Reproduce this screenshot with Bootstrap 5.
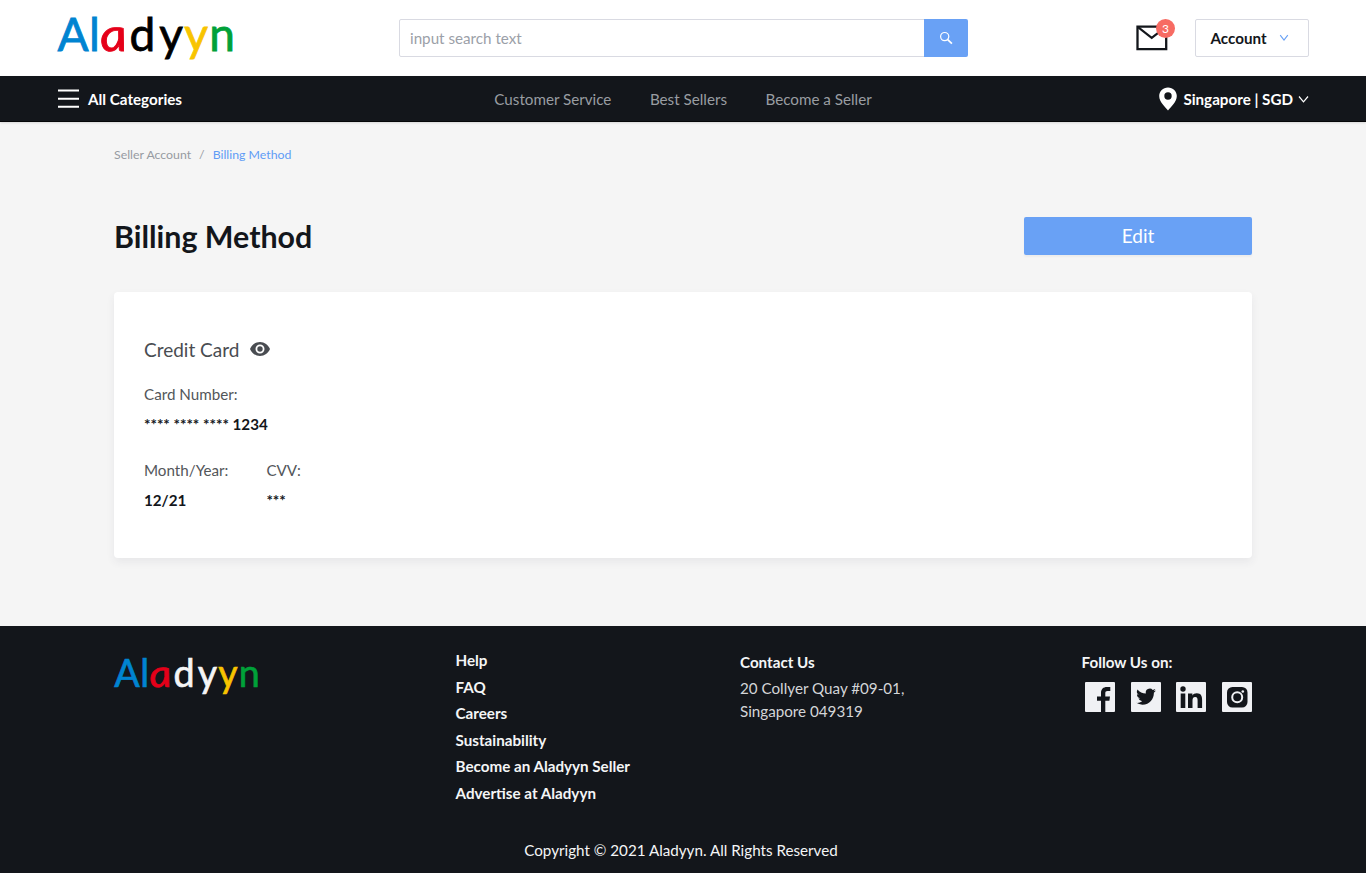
<!DOCTYPE html>
<html lang="en">
<head>
<meta charset="utf-8">
<meta name="viewport" content="width=device-width, initial-scale=1">
<title>Aladyyn - Billing Method</title>
<link href="https://cdn.jsdelivr.net/npm/bootstrap@5.3.0/dist/css/bootstrap.min.css" rel="stylesheet">
<style>
body{font-family:Lato,"Liberation Sans",sans-serif;font-size:15.2px;line-height:23px;background:#f5f5f5;color:#13161b}
a{color:inherit;text-decoration:none}
.topbar{height:76px;padding:0 57px}
.logo-svg{display:block;overflow:visible}
.logo-svg text{font-size:46px;text-anchor:middle;stroke-width:.8px;stroke:currentColor;fill:currentColor}
.c-blue{color:#0084d1}.c-red{color:#e50019}.c-yellow{color:#f8c400}.c-green{color:#00a139}
.search-group{width:569px;height:38px;margin-left:164.5px}
.search-group .form-control{font-size:15.2px;padding:0 10.5px;border-color:#d9dae2;border-radius:2px;height:38px}
.search-group .form-control::placeholder{color:#9ba0a8}
.search-group .btn{width:44px;border-radius:0 2px 2px 0}
.btn-sky{background:#69a1f5;color:#fff;border:0;padding:0}
.btn-sky:hover{background:#5792ec;color:#fff}
.mail-link{width:32px;margin-right:27px;line-height:0}
.mail-count{left:20px;top:-6px;width:19px;height:19px;font-size:12px;background:#f76b63;color:#fff;line-height:19px}
.account-btn{width:114px;height:38px;border:1px solid #d9dae2;border-radius:2px;padding:0 19px 0 14.5px;font-weight:700;font-size:15.2px;color:#13161b}
.mainbar{height:46px;background:#13161b;padding:0 57px;box-shadow:inset 0 -1px #050608,0 1px 2px rgba(0,0,0,.12);color:#fff}
.menu-links{gap:38.5px;color:#999da2}
.page{height:504px;padding:0 114px}
.crumbs{padding-top:21px;font-size:12.3px;color:#979ba2}
.crumbs .here{color:#5f9cf5}
.page-title{font-size:30.4px;line-height:38px;font-weight:700}
.title-row{margin-top:51.4px}
.edit-btn{width:228px;height:38px;font-size:19px;border-radius:2px;box-shadow:0 2px 2px rgba(0,0,0,.04)}
.bill-card{margin-top:36.6px;height:266px;border-radius:4px;padding:45px 30px 0;box-shadow:0 4px 9px rgba(60,60,90,.07)}
.card-kind{font-size:19px;line-height:26px;color:#494c51}
.field-label{color:#53565a}
.field-value{font-weight:700;margin-top:7px}
.foot{height:247px;background:#13161b;color:#f4f5f6;padding:0 114px}
.foot-links{line-height:26.6px;font-weight:700}
.addr{color:#d3d5d8}
</style>
</head>
<body>
<header class="topbar bg-white d-flex align-items-center">
  <a href="#" aria-label="Aladyyn"><svg class="logo-svg" width="177" height="52" viewBox="0 0 177 52"><g transform="translate(0 38.5)"><text x="16" class="c-blue">A</text><text x="37.5" class="c-blue">l</text><text class="c-red" font-style="italic" transform="translate(58.5 0) skewX(9) scale(1.16 1)">a</text><text x="85.5" style="color:#000">d</text><text x="114" style="color:#000">y</text><text x="139" class="c-yellow">y</text><text x="165" class="c-green">n</text></g></svg></a>
  <form class="input-group search-group flex-nowrap">
    <input class="form-control" type="text" placeholder="input search text">
    <button class="btn btn-sky d-flex align-items-center justify-content-center" type="button" aria-label="Search"><svg width="14" height="14" viewBox="0 0 14 14" fill="none" stroke="#fff" stroke-width="1.2"><circle cx="5.7" cy="5.6" r="4.1"/><path d="M8.7 8.6l4.2 4" stroke-width="1.7"/></svg></button>
  </form>
  <a href="#" class="mail-link position-relative ms-auto" aria-label="Messages"><svg width="32" height="26" viewBox="0 0 32 26" fill="none" stroke="#13161b" stroke-width="2.3"><path d="M1.5 1.6h28.7v22.6H1.5z"/><path d="M2 2.2l13.7 10.7L29.6 2.2" stroke-width="2.1"/></svg><span class="mail-count position-absolute rounded-circle text-center">3</span></a>
  <button class="account-btn bg-white d-flex align-items-center justify-content-between" type="button">Account<svg width="10" height="8" viewBox="0 0 10 8" fill="none" stroke="#69a1f5" stroke-width="1.1"><path d="M1.2 1.2L5 6.2l3.8-5"/></svg></button>
</header>
<nav class="mainbar d-flex align-items-center justify-content-between position-relative">
  <a href="#" class="d-flex align-items-center fw-bold"><svg class="me-2" width="23" height="20" viewBox="0 0 23 20" stroke="#fff" stroke-width="2"><path d="M1 1.5h21M1 9.700h21M1 17.700h21"/></svg>All Categories</a>
  <div class="menu-links d-flex position-absolute start-50 translate-middle-x text-nowrap"><a href="#">Customer Service</a><a href="#">Best Sellers</a><a href="#">Become a Seller</a></div>
  <a href="#" class="d-flex align-items-center fw-bold"><svg width="18" height="24" viewBox="0 0 18 24" style="margin-right:6px"><path fill="#fff" fill-rule="evenodd" d="M9 .5C4 .5.2 4.2.2 9c0 5.800 5.800 10.700 8.800 14.500C12 19.700 17.800 14.800 17.800 9 17.800 4.200 14 .5 9 .5zM9 5.300a3.700 3.700 0 1 1 0 7.400 3.700 3.700 0 0 1 0-7.400z"/></svg>Singapore | SGD<svg width="11" height="9" viewBox="0 0 11 9" fill="none" stroke="#fff" stroke-width="1.200" style="margin-left:5px"><path d="M1 1.500l4.500 5.300L10 1.500"/></svg></a>
</nav>
<main class="page">
  <div class="crumbs d-flex"><a href="#">Seller Account</a><span class="px-2">/</span><span class="here">Billing Method</span></div>
  <div class="title-row d-flex justify-content-between align-items-center">
    <h1 class="page-title m-0">Billing Method</h1>
    <button class="btn btn-sky edit-btn" type="button">Edit</button>
  </div>
  <section class="bill-card bg-white">
    <div class="card-kind d-flex align-items-center">Credit Card<svg width="20" height="14" viewBox="0 0 20 14" style="margin:-2px 0 0 10.500px"><path fill="#494c51" fill-rule="evenodd" d="M10 0C5.500 0 1.700 2.900 0 7c1.700 4.100 5.500 7 10 7s8.300-2.900 10-7c-1.700-4.100-5.500-7-10-7zm0 2.500a4.500 4.500 0 1 1 0 9 4.500 4.500 0 0 1 0-9z"/><circle cx="10" cy="7" r="2.700" fill="#494c51"/></svg></div>
    <div style="margin-top:20px"><div class="field-label">Card Number:</div><div class="field-value">**** **** **** 1234</div></div>
    <div class="d-flex" style="margin-top:23px;gap:38px">
      <div><div class="field-label">Month/Year:</div><div class="field-value">12/21</div></div>
      <div><div class="field-label">CVV:</div><div class="field-value">***</div></div>
    </div>
  </section>
</main>
<footer class="foot d-flex flex-column">
  <div class="row g-0" style="height:213px">
    <div style="width:341.500px;padding-top:29px"><svg class="logo-svg" width="145" height="43" viewBox="0 0 177 52"><g transform="translate(0 38.5)"><text x="16" class="c-blue">A</text><text x="37.5" class="c-blue">l</text><text class="c-red" font-style="italic" transform="translate(58.5 0) skewX(9) scale(1.16 1)">a</text><text x="85.5">d</text><text x="114">y</text><text x="139" class="c-yellow">y</text><text x="165" class="c-green">n</text></g></svg></div>
    <div class="foot-links d-flex flex-column" style="width:284.500px;padding-top:21px"><a href="#">Help</a><a href="#">FAQ</a><a href="#">Careers</a><a href="#">Sustainability</a><a href="#">Become an Aladyyn Seller</a><a href="#">Advertise at Aladyyn</a></div>
    <div style="width:341.500px;padding-top:25px"><div class="fw-bold">Contact Us</div><div class="addr" style="margin-top:3.200px">20 Collyer Quay #09-01,<br>Singapore 049319</div></div>
    <div class="col" style="padding-top:25px"><div class="fw-bold">Follow Us on:</div>
      <div class="d-flex" style="gap:15.500px;margin:7.500px 0 0 3.500px">
        <svg class="flex-shrink-0" width="30" height="30" viewBox="0 0 30 30"><rect width="30" height="30" rx="1" fill="#f0f1f4"/><path fill="#13161b" d="M16 30V18.700h-4v-4.100h4V11c0-3.900 2.200-6 6-6h3.300v4H22.500c-1.600 0-2.200.7-2.200 2.200v3.400H25l-.6 4.100h-4.100V30z"/></svg>
        <svg class="flex-shrink-0" width="30" height="30" viewBox="0 0 30 30"><rect width="30" height="30" rx="1" fill="#f0f1f4"/><path fill="#13161b" transform="translate(5.200 4.800) scale(.82)" d="M23.950 4.570a10 10 0 0 1-2.820.77 4.960 4.960 0 0 0 2.160-2.720c-.95.550-2 .95-3.130 1.180a4.920 4.920 0 0 0-8.380 4.480C7.690 8.090 4.070 6.130 1.640 3.160a4.920 4.920 0 0 0 1.520 6.570 4.900 4.900 0 0 1-2.230-.61v.06a4.920 4.920 0 0 0 3.950 4.830 5 5 0 0 1-2.210.08 4.940 4.940 0 0 0 4.600 3.420A9.870 9.870 0 0 1 0 19.540a13.990 13.990 0 0 0 7.550 2.210c9.050 0 14-7.500 14-13.980 0-.21 0-.42-.02-.63a9.940 9.940 0 0 0 2.460-2.550z"/></svg>
        <svg class="flex-shrink-0" width="30" height="30" viewBox="0 0 30 30"><rect width="30" height="30" rx="1" fill="#f0f1f4"/><g fill="#13161b"><circle cx="7" cy="7" r="2.700"/><path d="M4.700 11.500h4.600V26H4.700zM12 11.500h4.400v2c.8-1.400 2.400-2.300 4.400-2.300 4.300 0 5.300 2.800 5.300 6.800v8h-4.500v-7.200c0-2-.3-3.700-2.400-3.700s-2.700 1.700-2.700 3.700V26H12z"/></g></svg>
        <svg class="flex-shrink-0" width="30" height="30" viewBox="0 0 30 30"><rect width="30" height="30" rx="1" fill="#f0f1f4"/><rect x="5" y="5" width="20.500" height="20.500" rx="5.500" fill="#13161b"/><circle cx="15.200" cy="15.200" r="5" fill="none" stroke="#f0f1f4" stroke-width="2"/><circle cx="20.800" cy="9.500" r="1.300" fill="#f0f1f4"/></svg>
      </div>
    </div>
  </div>
  <div class="text-center pe-1">Copyright © 2021 Aladyyn. All Rights Reserved</div>
</footer>
<script src="https://cdn.jsdelivr.net/npm/bootstrap@5.3.0/dist/js/bootstrap.bundle.min.js"></script>
</body>
</html>
